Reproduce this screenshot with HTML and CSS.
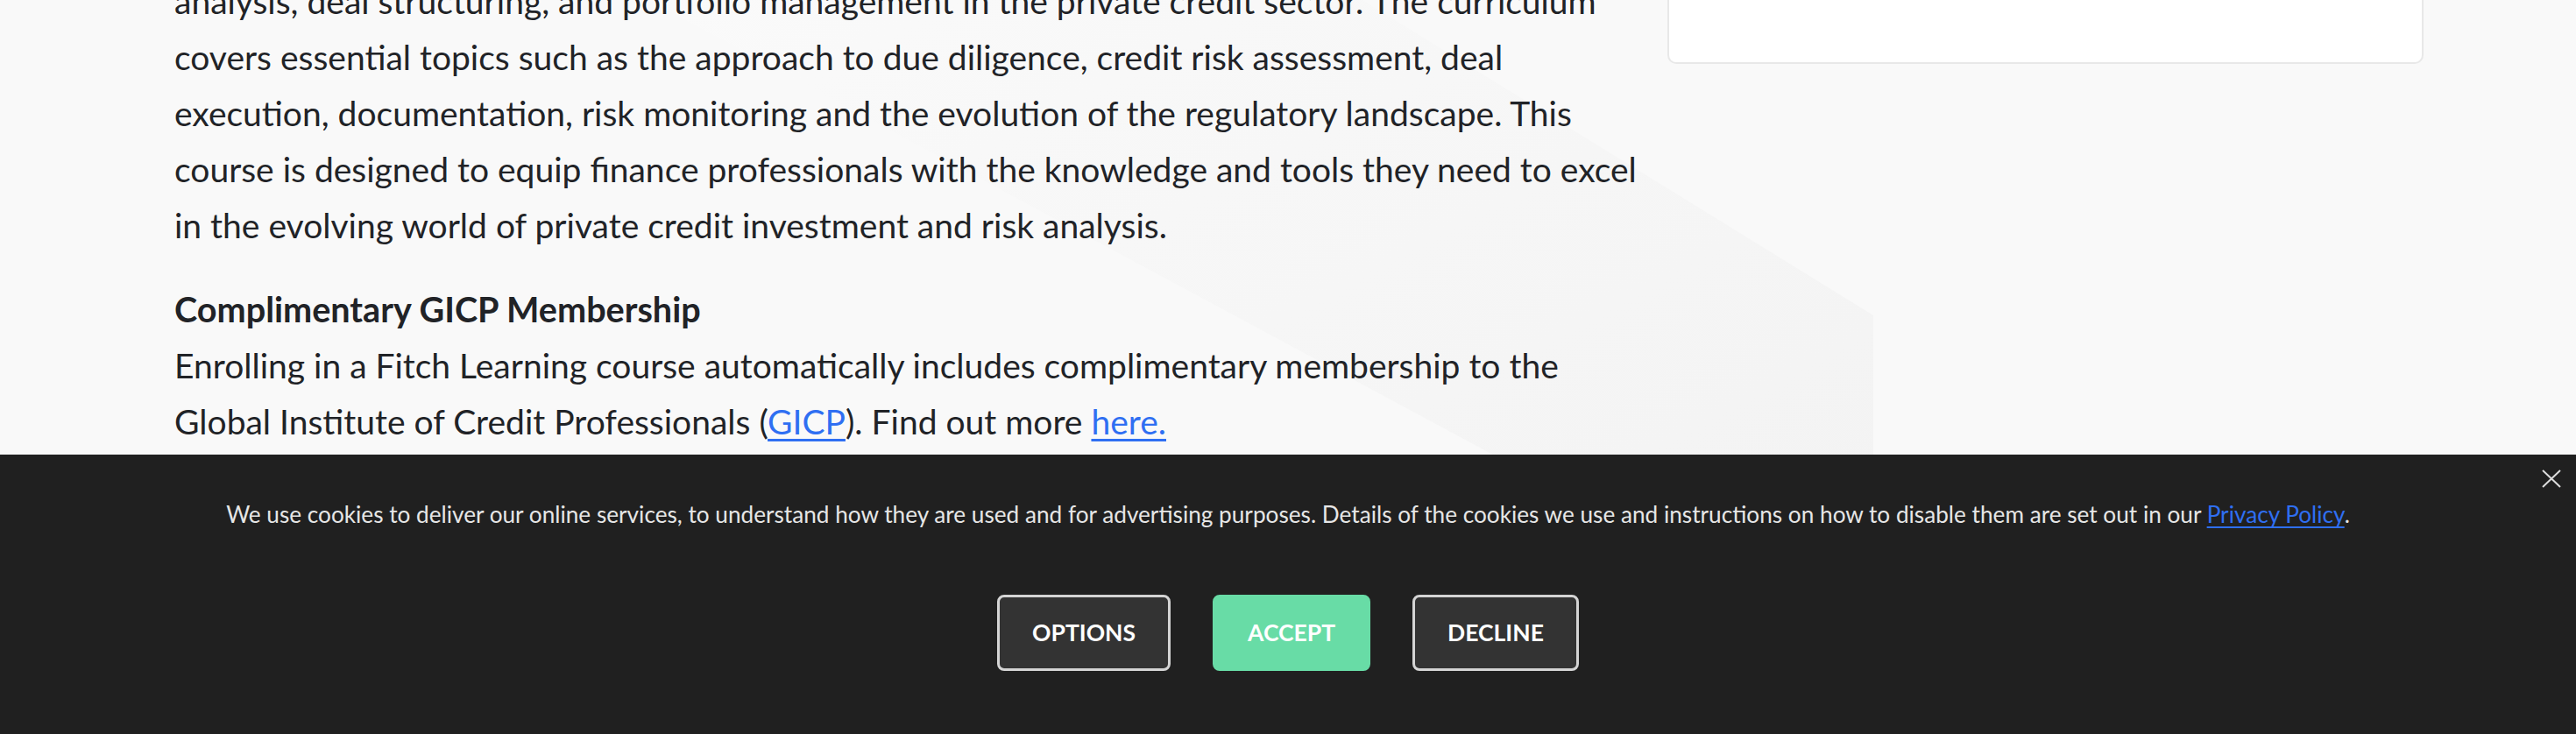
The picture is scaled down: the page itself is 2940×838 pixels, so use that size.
FILE: index.html
```html
<!DOCTYPE html>
<html lang="en">
<head>
<meta charset="utf-8">
<title>Fitch Learning – Course</title>
<link rel="stylesheet" href="styles.css">
</head>
<body>
<svg class="bg-shape" width="2940" height="838" viewBox="0 0 2940 838" aria-hidden="true">
  <defs>
    <linearGradient id="band" x1="0" y1="0" x2="1" y2="1">
      <stop offset="0" stop-color="#fafafa"/>
      <stop offset="1" stop-color="#f2f2f2"/>
    </linearGradient>
  </defs>
  <polygon points="740,0 1555,0 2138,360 2138,753" fill="url(#band)"/>
</svg>
<main class="page">
  <div class="layout">
    <section class="content">
      <p class="body-text">analysis, deal structuring, and portfolio management in the private credit sector. The curriculum covers essential topics such as the approach to due diligence, credit risk assessment, deal execution, documentation, risk monitoring and the evolution of the regulatory landscape. This course is designed to equip finance professionals with the knowledge and tools they need to excel in the evolving world of private credit investment and risk analysis.</p>
      <p class="body-text"><strong>Complimentary GICP Membership</strong><br>Enrolling in a Fitch Learning course automatically includes complimentary membership to the Global Institute of Credit Professionals (<a href="#">GICP</a>). Find out more <a href="#">here.</a></p>
    </section>
    <aside class="sidebar">
      <div class="card"></div>
    </aside>
  </div>
</main>
<div class="cookie-banner">
  <button class="cookie-close" type="button" aria-label="Close">
    <svg width="22" height="21" viewBox="0 0 22 21"><path d="M1 1 L21 20 M21 1 L1 20" stroke="#dcdcdc" stroke-width="2" fill="none"/></svg>
  </button>
  <p class="cookie-text">We use cookies to deliver our online services, to understand how they are used and for advertising purposes. Details of the cookies we use and instructions on how to disable them are set out in our <a href="#">Privacy Policy</a>.</p>
  <div class="cookie-actions">
    <button class="cookie-btn" type="button">OPTIONS</button>
    <button class="cookie-btn accept" type="button">ACCEPT</button>
    <button class="cookie-btn" type="button">DECLINE</button>
  </div>
</div>
</body>
</html>
```
FILE: styles.css
```css
html, body {
  margin: 0;
  padding: 0;
  height: 100%;
  overflow: hidden;
}
body {
  background: #f9f9f9;
  font-family: Lato, "Liberation Sans", sans-serif;
  color: #212327;
  position: relative;
}
.bg-shape {
  position: absolute;
  top: 0;
  left: 0;
  z-index: 0;
}
.page {
  position: relative;
  z-index: 1;
  margin-top: -31px;
  padding-left: 199px;
}
.layout {
  display: grid;
  grid-template-columns: 1681px 863px;
  column-gap: 23px;
  align-items: start;
}
.body-text {
  margin: 0 0 32px;
  font-size: 39px;
  line-height: 64px;
}
.body-text strong {
  font-weight: 700;
  font-size: 39.6px;
}
.body-text a {
  color: #2f6ff2;
  text-decoration: underline;
  text-underline-offset: 5px;
  text-decoration-thickness: 3px;
}
.card {
  height: 102px;
  background: #ffffff;
  border: 2px solid #e8e8e8;
  border-top: none;
  border-radius: 0 0 10px 10px;
}
.cookie-banner {
  position: fixed;
  left: 0;
  right: 0;
  bottom: 0;
  height: 319px;
  z-index: 10;
  background: #202020;
  box-sizing: border-box;
  padding-top: 47px;
  display: flex;
  flex-direction: column;
  align-items: center;
}
.cookie-close {
  position: absolute;
  top: 15px;
  right: 16px;
  width: 24px;
  height: 24px;
  padding: 0;
  border: none;
  background: transparent;
  display: flex;
  align-items: center;
  justify-content: center;
}
.cookie-text {
  margin: 0;
  font-size: 26.2px;
  line-height: 42px;
  color: #e6e6e6;
  text-align: center;
}
.cookie-text a {
  color: #2f6ff2;
  text-decoration: underline;
  text-underline-offset: 4px;
  text-decoration-thickness: 2px;
}
.cookie-actions {
  margin-top: 71px;
  display: flex;
  gap: 48px;
}
.cookie-btn {
  height: 87px;
  box-sizing: border-box;
  padding: 0 37px;
  background: #333333;
  border: 3px solid #d4d4d4;
  border-radius: 8px;
  color: #ffffff;
  font-family: Lato, "Liberation Sans", sans-serif;
  font-weight: 700;
  font-size: 26.5px;
  line-height: 1;
  display: flex;
  align-items: center;
  justify-content: center;
}
.cookie-btn.accept {
  background: #68dca6;
  border-color: #68dca6;
}
```
